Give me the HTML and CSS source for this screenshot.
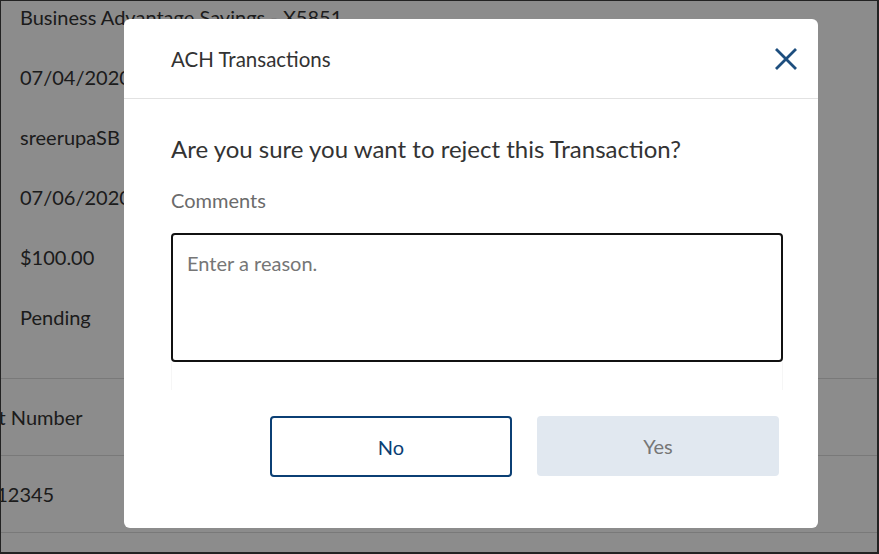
FILE: index.html
```html
<!DOCTYPE html>
<html lang="en">
<head>
<meta charset="utf-8">
<title>ACH Transactions</title>
<link rel="stylesheet" href="styles.css">
</head>
<body>
<div class="page">
  <div class="details">
    <div class="field">Business Advantage Savings - X5851</div>
    <div class="field">07/04/2020</div>
    <div class="field">sreerupaSB</div>
    <div class="field">07/06/2020</div>
    <div class="field">$100.00</div>
    <div class="field">Pending</div>
  </div>
  <div class="table">
    <div class="trow head"><span class="cell cut">Account Number</span></div>
    <div class="trow"><span class="cell cut2">0012345</span></div>
    <div class="trow"></div>
  </div>

  <div class="overlay">
    <div class="modal" role="dialog" aria-labelledby="mtitle">
      <div class="modal-header">
        <h2 id="mtitle" class="modal-title">ACH Transactions</h2>
        <button class="close" aria-label="Close">
          <svg width="24" height="24" viewBox="0 0 24 24"><path d="M2 2 L22 22 M22 2 L2 22" stroke="#1d4e7e" stroke-width="2.8" fill="none"/></svg>
        </button>
      </div>
      <div class="modal-body">
        <p class="question">Are you sure you want to reject this Transaction?</p>
        <label class="label" for="reason">Comments</label>
        <textarea id="reason" class="reason" placeholder="Enter a reason."></textarea>
        <div class="hint"></div>
        <div class="actions">
          <button class="btn btn-no">No</button>
          <button class="btn btn-yes" disabled>Yes</button>
        </div>
      </div>
    </div>
  </div>
</div>
</body>
</html>
```

FILE: styles.css
```css
html, body {
  margin: 0;
  padding: 0;
}
body {
  font-family: "Lato", "Liberation Sans", sans-serif;
  background: #fff;
}
.page {
  position: relative;
  width: 879px;
  height: 554px;
  box-sizing: border-box;
  border-style: solid;
  border-color: #222;
  border-width: 1px 2px 2px 1px;
  overflow: hidden;
  background: #fff;
  color: #333;
}
.details {
  display: flex;
  flex-direction: column;
  padding-left: 19px;
  margin-top: -2px;
}
.field {
  height: 60px;
  display: flex;
  align-items: center;
  font-size: 20px;
  margin-top: -12px;
  margin-bottom: 12px;
}
.table {
  margin-top: 19px;
  border-top: 1px solid #ddd;
}
.trow {
  height: 76px;
  border-bottom: 1px solid #ddd;
  display: flex;
  align-items: center;
  font-size: 20px;
}
.cell.cut {
  margin-left: -68px;
}
.cell.cut2 {
  margin-left: -28px;
}

.overlay {
  position: absolute;
  inset: 0;
  background: rgba(0, 0, 0, 0.45);
}
.modal {
  position: absolute;
  left: 123px;
  top: 18px;
  width: 694px;
  height: 509px;
  background: #fff;
  border-radius: 6px;
  display: flex;
  flex-direction: column;
}
.modal-header {
  height: 80px;
  box-sizing: border-box;
  border-bottom: 1px solid #e2e2e2;
  display: flex;
  align-items: center;
  justify-content: space-between;
  padding: 0 20px 0 47px;
}
.modal-title {
  margin: 0;
  font-size: 20.5px;
  font-weight: 400;
  color: #333;
}
.close {
  background: none;
  border: 0;
  padding: 0;
  width: 24px;
  height: 24px;
  cursor: pointer;
  display: flex;
}
.modal-body {
  padding: 34px 35px 0 47px;
  display: flex;
  flex-direction: column;
}
.question {
  margin: 0;
  font-size: 24px;
  line-height: 32px;
  color: #333;
}
.label {
  margin-top: 23px;
  font-size: 20px;
  line-height: 24px;
  color: #6b6b6b;
}
.reason {
  margin-top: 21px;
  width: 612px;
  height: 129px;
  box-sizing: border-box;
  border: 2px solid #111;
  border-radius: 4px;
  padding: 16px 14px;
  font-family: inherit;
  font-size: 20px;
  resize: none;
}
.reason::placeholder {
  color: #767676;
}
.hint {
  width: 612px;
  height: 28px;
  border-left: 1px solid #f6f6f6;
  border-right: 1px solid #f6f6f6;
  box-sizing: border-box;
}
.actions {
  margin-top: 26px;
  display: flex;
  justify-content: flex-end;
  gap: 25px;
  padding-right: 4px;
}
.btn {
  width: 242px;
  height: 61px;
  border-radius: 4px;
  font-family: inherit;
  font-size: 20px;
  box-sizing: border-box;
}
.btn-no {
  background: #fff;
  border: 2px solid #0b3f74;
  color: #0b3f74;
}
.btn-yes {
  background: #e1e8f0;
  border: 0;
  color: #767676;
  height: 60px;
}
```
